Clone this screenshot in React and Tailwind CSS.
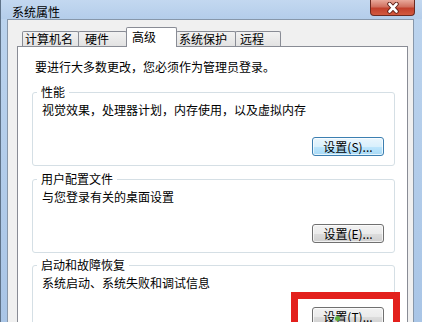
import React from "react";

const font = "font-['Noto_Sans_CJK_SC','Noto_Sans',sans-serif]";

function WinButton({ label, focused }) {
  const skin = focused
    ? "border-[#3c7fb1] bg-[linear-gradient(to_bottom,#eaf6fd_0%,#d9f0fc_50%,#bee6fd_51%,#a7d9f5_100%)]"
    : "border-[#707070] bg-[linear-gradient(to_bottom,#f2f2f2_0%,#ebebeb_50%,#dddddd_51%,#cfcfcf_100%)]";
  return (
    <button
      className={`w-[72px] h-[19px] rounded-[3px] border ${skin} shadow-[inset_0_0_0_1px_rgba(255,255,255,0.7)] flex items-center justify-center text-[12px] leading-[14px] text-black`}
    >
      {label}
    </button>
  );
}

function Group({ title, text, button, focused, className, btnGap = "mt-[20px]" }) {
  return (
    <fieldset
      className={`w-[363px] ml-[14px] border border-[#d5dfe5] rounded-[3px] ${className}`}
    >
      <legend className="ml-[4px] px-[4px] leading-[14px]">{title}</legend>
      <p className="mt-[4px] pl-[9px] leading-[14px]">{text}</p>
      <div className={`${btnGap} pb-[9px] pr-[10px] flex justify-end`}>
        <WinButton label={button} focused={focused} />
      </div>
    </fieldset>
  );
}

const tabs = [
  { name: "计算机名", w: "w-[57px]", pl: "pl-[2px]" },
  { name: "硬件", w: "w-[49px]", pl: "pl-[6px]" },
  { name: "高级", w: "w-[51px]", pl: "pl-[5px]", active: true },
  { name: "系统保护", w: "w-[60px]", pl: "pl-[2px]" },
  { name: "远程", w: "w-[46px]", pl: "pl-[4px]" },
];

export default function App() {
  return (
    <div
      className={`relative w-[422px] h-[322px] overflow-hidden flex flex-col border-l border-[#5f7389] bg-[linear-gradient(to_bottom,#bcd4ee,#a9c5e6)] text-[12px] leading-[14px] text-black ${font}`}
    >
      {/* title bar */}
      <div className="h-[24px] flex items-start justify-between bg-[linear-gradient(to_bottom,#c3d8f0,#b4cdea)]">
        <span className="pl-[11px] pt-[5px]">系统属性</span>
        <div className="mr-[7px] w-[45px] h-[16px] rounded-b-[4px] border border-t-0 border-[#6b2a21] bg-[linear-gradient(to_bottom,#e9a99b_0%,#d0705f_45%,#c2402c_55%,#d35a3f_100%)] flex items-center justify-center">
          <svg width="16" height="12" viewBox="0 0 16 12">
            <path d="M4.5 2 L11.5 9.5 M11.5 2 L4.5 9.5" stroke="#5b1a12" strokeWidth="4.4" strokeLinecap="round" />
            <path d="M4.5 2 L11.5 9.5 M11.5 2 L4.5 9.5" stroke="#ffffff" strokeWidth="2.6" strokeLinecap="round" />
          </svg>
        </div>
      </div>

      {/* frame + client area */}
      <div className="flex-1 flex pl-[6px] pr-[8px]">
        <div className="flex-1 border-l border-t border-r border-[#8797aa] bg-[#f0f0f0] pt-[7px] pl-[9px] pr-[5px] flex flex-col">
          {/* tabs */}
          <div className="h-[20px] ml-[5px] flex items-end">
            {tabs.map((t, i) =>
              t.active ? (
                <div
                  key={t.name}
                  className={`${t.w} ${t.pl} h-[20px] -ml-px relative z-10 bg-white border border-b-0 border-[#898c95] rounded-t-[2px] pt-[2px]`}
                >
                  {t.name}
                </div>
              ) : (
                <div
                  key={t.name}
                  className={`${t.w} ${t.pl} h-[16px] ${i > 0 ? "-ml-px" : ""} border border-b-0 border-[#898c95] rounded-t-[2px] bg-[linear-gradient(to_bottom,#f2f2f2,#e1e1e1)]`}
                >
                  {t.name}
                </div>
              )
            )}
          </div>

          {/* tab panel */}
          <div className="relative -mt-px flex-1 bg-white border border-b-0 border-[#898c95] pt-[13px]">
            <p className="pl-[17px] leading-[14px]">
              要进行大多数更改，您必须作为管理员登录。
            </p>
            <Group
              className="mt-[11px]"
              title="性能"
              text="视觉效果，处理器计划，内存使用，以及虚拟内存"
              button="设置(S)..."
              focused
            />
            <Group
              className="mt-[6px]"
              title="用户配置文件"
              text="与您登录有关的桌面设置"
              button="设置(E)..."
            />
            <Group
              className="mt-[5px]"
              title="启动和故障恢复"
              text="系统启动、系统失败和调试信息"
              button="设置(T)..."
              btnGap="mt-[17px]"
            />
          </div>
        </div>
      </div>

      {/* red highlight box */}
      <div className="absolute left-[290px] top-[292px] w-[109px] h-[50px] border-[7px] border-[#e3201c]" />
      <div className="absolute left-[334px] top-[316px] w-[5px] h-[5px] rounded-full bg-[#5fae3c]" />
    </div>
  );
}
